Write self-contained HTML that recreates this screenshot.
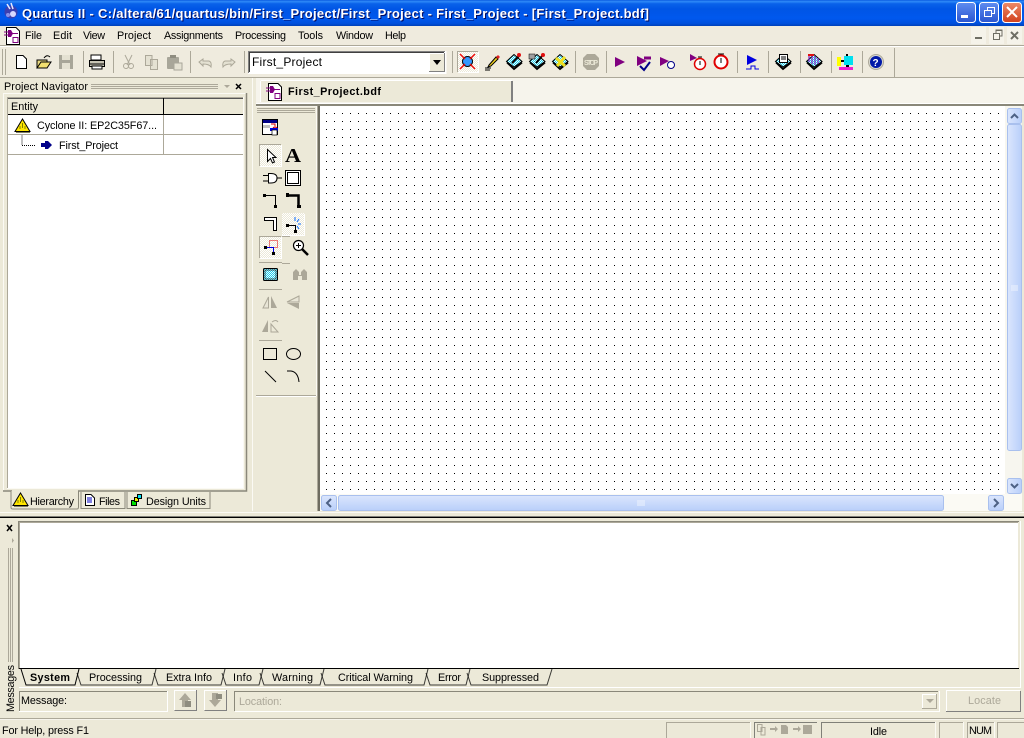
<!DOCTYPE html>
<html><head><meta charset="utf-8"><title>Quartus II</title>
<style>
html,body{margin:0;padding:0;background:#ece9d8;overflow:hidden}
svg{display:block}
text{font-family:"Liberation Sans",sans-serif;font-size:10.8px;fill:#000}
</style></head><body>
<svg width="1024" height="738" viewBox="0 0 1024 738" xmlns="http://www.w3.org/2000/svg">
<defs>
<linearGradient id="tb" x1="0" y1="0" x2="0" y2="1">
<stop offset="0" stop-color="#0a5ae0"/><stop offset=".06" stop-color="#2f8bf8"/><stop offset=".14" stop-color="#0a62ea"/><stop offset=".35" stop-color="#0055e5"/><stop offset=".7" stop-color="#0058ee"/><stop offset=".9" stop-color="#0050dd"/><stop offset="1" stop-color="#0040b8"/></linearGradient>
<linearGradient id="bl" x1="0" y1="0" x2="0" y2="1"><stop offset="0" stop-color="#5f8df0"/><stop offset="1" stop-color="#2a55d0"/></linearGradient>
<linearGradient id="rd" x1="0" y1="0" x2="0" y2="1"><stop offset="0" stop-color="#ec8a68"/><stop offset="1" stop-color="#d1401c"/></linearGradient>
<linearGradient id="sb" x1="0" y1="0" x2="1" y2="0"><stop offset="0" stop-color="#dbe6fd"/><stop offset="1" stop-color="#b9cffa"/></linearGradient>
<linearGradient id="sh" x1="0" y1="0" x2="0" y2="1"><stop offset="0" stop-color="#dbe6fd"/><stop offset="1" stop-color="#b9cffa"/></linearGradient>
<pattern id="dots" x="326" y="113" width="8" height="8" patternUnits="userSpaceOnUse"><rect width="1" height="1" fill="#000"/></pattern>
<pattern id="dith" width="2" height="2" patternUnits="userSpaceOnUse"><rect width="2" height="2" fill="#ece9d8"/><rect width="1" height="1" fill="#fff"/><rect x="1" y="1" width="1" height="1" fill="#fff"/></pattern>
<pattern id="cy" width="2" height="2" patternUnits="userSpaceOnUse"><rect width="2" height="2" fill="#22ccee"/><rect width="1" height="1" fill="#e8ffff"/><rect x="1" y="1" width="1" height="1" fill="#e8ffff"/></pattern>
<symbol id="bdf" width="17" height="18" viewBox="0 0 17 18" overflow="visible">
<path d="M2.500 .5H12L15.500 4V17.500H2.500Z" fill="#fff" stroke="#000"/>
<path d="M0 5H4M0 8H4M8 6.500H14M9 10.500V15.500H14V10.500Z" stroke="#800080" fill="none"/>
<path d="M4 3H7L9 6.500L7 10H4Z" fill="#800080"/>
</symbol>
<symbol id="disk" width="17" height="18" viewBox="0 0 17 18" overflow="visible">
<path d="M8 1.500L16 8.500L8 14L0.500 8.500Z" fill="url(#cy)" stroke="#000"/>
<path d="M1 9.500L8 16L16 9.500" fill="none" stroke="#000" stroke-width="1.800"/>
</symbol>
<symbol id="warn" width="17" height="15" viewBox="0 0 17 15" overflow="visible">
<path d="M8.500 1L16 13.500H1Z" fill="#ffe600" stroke="#000"/><path d="M8.500 5V10M6 8V11M11 8V11" stroke="#808000"/><path d="M2 14.500H16" stroke="#808060"/>
</symbol>
</defs>

<!-- base -->
<rect width="1024" height="738" fill="#ece9d8"/>
<!-- title -->
<rect width="1024" height="26" fill="url(#tb)"/>
<circle cx="11" cy="12" r="6.500" fill="#3b3fb0"/><circle cx="13" cy="14" r="3" fill="#d8d8ff"/><path d="M7 4L10 9M11 3L13 9" stroke="#e8e8ff" stroke-width="1.500"/><circle cx="8" cy="15" r="2" fill="#8890e8"/>
<text x="22" y="18" textLength="627" lengthAdjust="spacing" style="font-size:13px;font-weight:bold;fill:#000a60" dx="1" dy="1">Quartus II - C:/altera/61/quartus/bin/First_Project/First_Project - First_Project - [First_Project.bdf]</text>
<text x="22" y="18" textLength="627" lengthAdjust="spacing" style="font-size:13px;font-weight:bold;fill:#fff">Quartus II - C:/altera/61/quartus/bin/First_Project/First_Project - First_Project - [First_Project.bdf]</text>
<g>
<rect x="956.500" y="2.500" width="19" height="20" rx="3" fill="url(#bl)" stroke="#fff"/><rect x="961" y="15" width="7" height="3" fill="#fff"/>
<rect x="979.500" y="2.500" width="19" height="20" rx="3" fill="url(#bl)" stroke="#fff"/><path d="M984.500 10.500h7v6h-7zM987.500 10V7.500h7v6H992" fill="none" stroke="#fff"/><path d="M984 10.500h8M987 7.500h8" stroke="#fff"/>
<rect x="1002.500" y="2.500" width="19" height="20" rx="3" fill="url(#rd)" stroke="#fff"/><path d="M1007 7L1017 17M1017 7L1007 17" stroke="#fff" stroke-width="2"/>
</g>

<!-- menu -->
<rect y="26" width="1024" height="20" fill="#efebde"/>
<use href="#bdf" x="4" y="27"/>
<text x="25" y="39" textLength="17">File</text><text x="53" y="39" textLength="19">Edit</text><text x="83" y="39" textLength="22">View</text><text x="117" y="39" textLength="34">Project</text><text x="164" y="39" textLength="59">Assignments</text><text x="235" y="39" textLength="51">Processing</text><text x="298" y="39" textLength="25">Tools</text><text x="336" y="39" textLength="37">Window</text><text x="385" y="39" textLength="21">Help</text>
<g>
<rect x="971" y="27" width="15" height="17" fill="#f5f3ea"/><rect x="989" y="27" width="15" height="17" fill="#f5f3ea"/><rect x="1007" y="27" width="15" height="17" fill="#f5f3ea"/>
<rect x="975" y="37" width="7" height="2" fill="#6e6e64"/>
<path d="M993.500 33.500h6v6h-6zM996 33v-3h6v6h-2" fill="none" stroke="#6e6e64"/><path d="M993 33.500h7M996 30.500h6" stroke="#6e6e64"/>
<path d="M1011 32L1018 39M1018 32L1011 39" stroke="#6e6e64" stroke-width="2"/>
</g>
<rect y="45" width="1024" height="1" fill="#aca899"/><rect y="46" width="1024" height="1" fill="#fff"/>

<!-- toolbar -->
<rect y="47" width="1024" height="30" fill="#efebde"/>
<rect y="77" width="1024" height="1" fill="#aca899"/>
<rect x="256" y="78" width="768" height="26" fill="#f6f4ec"/>
<rect x="252" y="78" width="1" height="438" fill="#fbfaf4"/>
<rect x="894" y="48" width="1" height="29" fill="#aca899"/>
<g fill="#aca899">
<rect x="2" y="49" width="1" height="26"/><rect x="5" y="49" width="1" height="26"/>
<rect x="83" y="51" width="1" height="22"/><rect x="113" y="51" width="1" height="22"/><rect x="190" y="51" width="1" height="22"/><rect x="244" y="51" width="1" height="22"/><rect x="452" y="51" width="1" height="22"/><rect x="575" y="51" width="1" height="22"/><rect x="606" y="51" width="1" height="22"/><rect x="737" y="51" width="1" height="22"/><rect x="768" y="51" width="1" height="22"/><rect x="800" y="51" width="1" height="22"/><rect x="831" y="51" width="1" height="22"/><rect x="862" y="51" width="1" height="22"/>
</g>
<!-- new open save -->
<path d="M16.500 55.500H23L26.500 59V68.500H16.500Z" fill="#fff" stroke="#000"/>
<path d="M37 60H47V68H37Z" fill="#e8d880" stroke="#000"/><path d="M37 68L41 62H51L47 68Z" fill="#f2e070" stroke="#000"/><path d="M44 58Q47 54 50 57" fill="none" stroke="#000"/>
<rect x="59" y="55" width="14" height="14" fill="#a8a699"/><rect x="62" y="55" width="8" height="5" fill="#e4e1d2"/><rect x="62" y="63" width="8" height="6" fill="#e4e1d2"/>
<!-- print -->
<path d="M91 55H101V60H91Z" fill="#fff" stroke="#000"/><path d="M89.500 60.500H104.500V66.500H89.500Z" fill="#c8c4b4" stroke="#000"/><path d="M92 66H102V69H92Z" fill="#fff" stroke="#000"/><path d="M90 64H104" stroke="#000"/>
<!-- cut copy paste -->
<path d="M125 55L130 65M132 55L127 65" stroke="#aca899" fill="none"/><circle cx="126" cy="66" r="2.500" fill="none" stroke="#aca899"/><circle cx="131" cy="66" r="2.500" fill="none" stroke="#aca899"/>
<path d="M145.500 55.500H152V65.500H145.500ZM150.500 59.500H157.500V69.500H150.500Z" fill="#e4e1d2" stroke="#aca899"/>
<rect x="167" y="57" width="12" height="12" rx="1" fill="#a8a699"/><rect x="170" y="55" width="6" height="3" fill="#8f8d80"/><rect x="174" y="63" width="8" height="7" fill="#e4e1d2" stroke="#a8a699"/>
<!-- undo redo -->
<path d="M199 62L203 59V61H209Q212 62 211 67Q209 64 203 64V66Z" fill="#e4e1d2" stroke="#aca899"/>
<path d="M235 62L231 59V61H225Q222 62 223 67Q225 64 231 64V66Z" fill="#e4e1d2" stroke="#aca899"/>
<!-- combo -->
<rect x="248" y="51" width="198" height="23" fill="#fff"/>
<path d="M248.500 73V51.500H445" fill="none" stroke="#808080"/><path d="M249.500 72V52.500H444" fill="none" stroke="#404040"/><path d="M248 73.500H446V51" fill="none" stroke="#fff"/>
<rect x="429" y="53" width="16" height="19" fill="#ece9d8"/><path d="M429.500 71.500V53.500H444" fill="none" stroke="#fff"/><path d="M429 71.500H444.500V53" fill="none" stroke="#808080"/>
<path d="M433 60H441L437 65Z" fill="#000"/>
<text x="252" y="66" textLength="70" style="font-size:12px">First_Project</text>
<!-- compile icons -->
<rect x="457" y="51" width="22" height="22" fill="url(#dith)"/><path d="M457.500 72V51.500H478" fill="none" stroke="#aca899"/><path d="M458 72.500H478.500V52" fill="none" stroke="#fff"/>
<circle cx="467.500" cy="61.500" r="5" fill="#3399ff" stroke="#000"/><path d="M460 54L465 59M475 54L470 59M460 69L465 64M475 69L470 64" stroke="#f01010" stroke-width="1.500"/>
<path d="M485 68H491M485 70H490" stroke="#000"/><path d="M489 65L496 57L498 59L491 66L488 67Z" fill="#f0d020" stroke="#000"/><path d="M496 57l2-2 2 2-2 2z" fill="#e02020"/>
<use href="#disk" x="506" y="53"/><path d="M512 63L519 56" stroke="#000" stroke-width="2"/><circle cx="519" cy="55" r="2" fill="#e01010"/>
<use href="#disk" x="529" y="53"/><rect x="529" y="54" width="6" height="5" fill="#a0a0a0" stroke="#000" stroke-width=".5"/><path d="M536 63L542 56" stroke="#000" stroke-width="2"/><circle cx="543" cy="55" r="2" fill="#e01010"/>
<use href="#disk" x="552" y="53"/><path d="M556 58L565 66M565 57L557 66" stroke="#f0e020" stroke-width="3"/>
<!-- stop -->
<path d="M587 54H595L599 58V66L595 70H587L583 66V58Z" fill="#aca899"/><text x="584" y="65" textLength="14" style="font-size:7px;font-weight:bold;fill:#ece9d8">STOP</text>
<!-- flags -->
<path d="M615 57L625 62L615 67Z" fill="#800080"/>
<path d="M637 56L647 61L637 66Z" fill="#800080"/><path d="M644 58H651" stroke="#800080" stroke-width="3"/><path d="M640 66L644 70L650 62" fill="none" stroke="#000088" stroke-width="2"/>
<path d="M660 57L669 61L660 66Z" fill="#800080"/><circle cx="671" cy="65" r="3.500" fill="#fff" stroke="#000088"/>
<path d="M690 54L697 58L690 61Z" fill="#800080"/><circle cx="700" cy="64" r="5.500" fill="#fff" stroke="#e00000" stroke-width="1.500"/><path d="M700 61V65M698 57H702" stroke="#000"/>
<circle cx="721" cy="62" r="6.500" fill="#fff" stroke="#e00000" stroke-width="2"/><path d="M721 58V63M718 54H724" stroke="#000"/>
<path d="M747 55L757 60L747 65Z" fill="#0000e0"/><path d="M746 69H751V66H755V69H759" fill="none" stroke="#0000e0"/>
<use href="#disk" x="775" y="53"/><rect x="779.500" y="54.500" width="8" height="8" fill="#fff" stroke="#000"/><path d="M781 57H786M781 59H786" stroke="#000"/>
<use href="#disk" x="806" y="53"/><path d="M809 54V62M812 54V64M815 56V65M818 58V64" stroke="#8020c0" stroke-width="1.200"/><path d="M808 55H814" stroke="#e01010" stroke-width="2"/>
<rect x="837" y="57" width="4" height="9" fill="#ffff00"/><rect x="841" y="60" width="3" height="2" fill="#000"/><rect x="844" y="56" width="9" height="9" fill="#00e0f0"/><rect x="846" y="54" width="2" height="2" fill="#000"/><rect x="846" y="65" width="3" height="2" fill="#000"/><rect x="839" y="67" width="14" height="3" fill="#f020d0"/>
<circle cx="876" cy="62" r="7.500" fill="#d8d8d0" stroke="#aca899"/><circle cx="876" cy="62" r="6" fill="#0018a8"/><text x="872.500" y="66" style="font-size:10px;font-weight:bold;fill:#fff">?</text>

<!-- navigator -->
<text x="4" y="90" textLength="84">Project Navigator</text>
<path d="M91 84.500H218M91 86.500H218M91 88.500H218" stroke="#aca899"/>
<path d="M224 85H230L227 88Z" fill="#aca899"/>
<path d="M236 84L241 89M241 84L236 89" stroke="#000" stroke-width="1.500"/>
<path d="M3.500 490V93.500H246" fill="none" stroke="#fbfaf4"/>
<path d="M246.500 93V491H3" fill="none" stroke="#8a887a" stroke-width="1.500"/>
<rect x="8" y="98" width="235" height="390" fill="#fff"/>
<path d="M7.500 488V97.500H243" fill="none" stroke="#aca899"/><path d="M7 488.500H243.500V97" fill="none" stroke="#fbfaf4"/>
<rect x="8" y="98" width="235" height="16" fill="#ece9d8"/><rect x="8" y="98" width="235" height="1" fill="#555"/><rect x="8" y="114" width="235" height="1" fill="#000"/>
<rect x="163" y="98" width="1" height="16" fill="#000"/>
<rect x="163" y="115" width="1" height="39" fill="#aca899"/><rect x="8" y="134" width="235" height="1" fill="#aca899"/><rect x="8" y="154" width="235" height="1" fill="#aca899"/>
<text x="11" y="110" textLength="27">Entity</text>
<use href="#warn" x="14" y="118"/>
<text x="37" y="129" textLength="120">Cyclone II: EP2C35F67...</text>
<path d="M22 135.500V145.500H35" fill="none" stroke="#000" stroke-dasharray="1 1"/>
<path d="M41 143H45V141H48L52 145L48 149H45V147H41Z" fill="#000088"/>
<text x="59" y="149" textLength="59">First_Project</text>

<!-- nav tabs -->
<path d="M11 491V507.500Q11 509 13 509H77Q78.500 509 78.500 507V491" fill="#ece9d8" stroke="#8a887a"/>
<rect x="12" y="490" width="66" height="2" fill="#ece9d8"/>
<use href="#warn" x="12" y="492"/>
<text x="30" y="505" textLength="44">Hierarchy</text>
<path d="M81 492V508.500H125V492" fill="#ece9d8" stroke="#8a887a"/>
<path d="M85.500 494.500H91L94.500 498V505.500H85.500Z" fill="#fff" stroke="#000"/><path d="M87 498H92M87 500H92M87 502H92" stroke="#0000c0"/>
<text x="99" y="505" textLength="21">Files</text>
<path d="M127 492V508.500H210V492" fill="#ece9d8" stroke="#8a887a"/>
<rect x="131.500" y="500.500" width="5" height="5" fill="#00e000" stroke="#000"/><rect x="134.500" y="497.500" width="4" height="4" fill="#f0f000" stroke="#000"/><rect x="137.500" y="494.500" width="4" height="4" fill="#00e0f0" stroke="#000"/>
<text x="146" y="505" textLength="60">Design Units</text>

<!-- bdf tab -->
<rect x="261" y="81" width="251" height="21" fill="#ece9d8"/>
<rect x="261" y="80" width="251" height="1" fill="#fff"/><rect x="260" y="81" width="1" height="21" fill="#fff"/><rect x="511" y="81" width="2" height="21" fill="#808080"/>
<use href="#bdf" x="266" y="83"/>
<text x="288" y="95" textLength="93" style="font-weight:bold">First_Project.bdf</text>
<rect x="256" y="103" width="768" height="1" fill="#fff"/>
<rect x="256" y="104" width="768" height="2" fill="#8a887a"/>

<!-- tool palette -->
<rect x="256" y="106" width="60" height="1" fill="#f6f4ec"/>
<path d="M257 108.500H315M257 110.500H315M257 112.500H315" stroke="#aca899"/>
<rect x="318" y="106" width="2" height="405" fill="#6e6c60"/>
<rect x="316" y="106" width="1" height="290" fill="#fbfaf4"/><rect x="317" y="106" width="1" height="405" fill="#aca899"/>
<rect x="256" y="395" width="60" height="1" fill="#aca899"/><rect x="256" y="396" width="60" height="1" fill="#fff"/>
<!-- tool icons -->
<rect x="262.500" y="119.500" width="15" height="15" fill="#fff" stroke="#000"/><rect x="263" y="120" width="14" height="3" fill="#000088"/><rect x="263" y="125" width="7" height="3" fill="#c0c0c0"/><path d="M271 124H275V128M273 127L275 129L277 127" fill="none" stroke="#e00000"/><rect x="270" y="128" width="8" height="3" fill="#0000e0"/><rect x="272" y="130" width="5" height="5" fill="#fff" stroke="#000" stroke-width=".7"/>
<rect x="259" y="144" width="23" height="23" fill="url(#dith)"/><path d="M259.500 166V144.500H281" fill="none" stroke="#aca899"/><path d="M260 166.500H281.500V145" fill="none" stroke="#fff"/>
<path d="M267.500 149.500V161.500L270.500 158.500L272.500 163L274.500 162L272.500 157.500H276Z" fill="#fff" stroke="#000"/>
<text x="285" y="162" textLength="16" lengthAdjust="spacingAndGlyphs" style="font-family:'Liberation Serif',serif;font-size:20px;font-weight:bold">A</text>
<path d="M268.500 173.500H271Q277 173.500 277 178Q277 183 271 183H268.500Z" fill="#fff" stroke="#000"/><path d="M263 175.500H268M263 181H268M277 178H282" stroke="#000"/>
<rect x="285.500" y="170.500" width="15" height="15" fill="#fff" stroke="#000"/><rect x="287.500" y="172.500" width="11" height="11" fill="none" stroke="#000"/>
<path d="M264 195.500H275.500V206" fill="none" stroke="#000"/><rect x="263" y="194" width="3" height="3" fill="#000"/><rect x="274" y="205" width="3" height="3" fill="#000"/>
<path d="M287 195.500H298.500V206" fill="none" stroke="#000" stroke-width="2.500"/><rect x="286" y="193" width="3" height="4" fill="#000"/><rect x="297" y="205" width="4" height="3" fill="#000"/>
<path d="M264.500 217.500H276.500V230.500H273.500V220.500H264.500Z" fill="#fff" stroke="#000"/>
<rect x="282" y="213" width="23" height="23" fill="url(#dith)"/><path d="M282 235.500H304.500V214" fill="none" stroke="#fff"/>
<path d="M287 225.500H295.500V231" fill="none" stroke="#000"/><rect x="286" y="224" width="3" height="3" fill="#000"/><rect x="294" y="230" width="3" height="3" fill="#000"/><path d="M295 217V221M299 219L297 222M301 224H298M299 229L297 226" stroke="#0a6cff"/>
<rect x="259" y="236" width="23" height="23" fill="url(#dith)"/><path d="M259.500 258V236.500H281" fill="none" stroke="#aca899"/><path d="M260 258.500H281.500V237" fill="none" stroke="#fff"/>
<rect x="269.500" y="240.500" width="8" height="7" fill="none" stroke="#e00000" stroke-dasharray="1 1"/><path d="M265 247.500H273.500V253" fill="none" stroke="#0000e0"/><rect x="264" y="246" width="3" height="3" fill="#000"/><rect x="272" y="252" width="3" height="3" fill="#000"/>
<rect x="282" y="236" width="8" height="1" fill="#aca899"/>
<circle cx="298.500" cy="245.500" r="5" fill="#fff" stroke="#000" stroke-width="1.200"/><path d="M296 245.500H301M298.500 243V248" stroke="#000"/><path d="M302 249L308 255" stroke="#000" stroke-width="2.500"/>
<rect x="259" y="262" width="23" height="1" fill="#aca899"/><rect x="282" y="263" width="8" height="1" fill="#aca899"/>
<rect x="263.500" y="268.500" width="14" height="12" rx="1" fill="url(#cy)" stroke="#000" stroke-width="1"/><rect x="265" y="270" width="11" height="9" fill="none" stroke="#000" stroke-width=".6"/>
<path d="M293 280V272L296 269L299 272V275H301V272L304 269L307 272V280H302V276H298V280Z" fill="#aca899"/>
<rect x="259" y="289" width="23" height="1" fill="#aca899"/>
<path d="M268.500 297L263 308H268.500Z" fill="#e8e5d6" stroke="#aca899"/><path d="M271 296V308H277Z" fill="#aca899"/>
<path d="M299 296L287 302H299Z" fill="#e8e5d6" stroke="#aca899"/><path d="M287 303H299V309Z" fill="#aca899"/>
<path d="M268 320L262 332H268Z" fill="#aca899"/><path d="M271 324V332H278Z" fill="none" stroke="#aca899"/><path d="M272 322Q276 319 278 322" fill="none" stroke="#aca899"/>
<rect x="259" y="340" width="23" height="1" fill="#aca899"/>
<rect x="263.500" y="348.500" width="13" height="11" fill="none" stroke="#000"/>
<ellipse cx="293.500" cy="354" rx="7" ry="5.500" fill="none" stroke="#000"/>
<path d="M265 371L276 382" stroke="#000"/>
<path d="M287 371H291Q298 372 299 382" fill="none" stroke="#000"/>

<!-- canvas -->
<rect x="320" y="106" width="687" height="388" fill="#fff"/>
<rect x="320" y="106" width="687" height="388" fill="url(#dots)"/>
<rect x="1005" y="106" width="17" height="388" fill="#f7f6ef"/>
<rect x="320" y="494" width="702" height="17" fill="#fbfaf4"/>
<!-- vscroll -->
<rect x="1007.500" y="108.500" width="14" height="15" rx="2" fill="url(#sb)" stroke="#a9c0ee"/><path d="M1011 118L1014.500 114.500L1018 118" fill="none" stroke="#4d6185" stroke-width="2"/>
<rect x="1007.500" y="124.500" width="14" height="326" rx="2" fill="url(#sb)" stroke="#a9c0ee"/>
<rect x="1007.500" y="478.500" width="14" height="15" rx="2" fill="url(#sb)" stroke="#a9c0ee"/><path d="M1011 484L1014.500 487.500L1018 484" fill="none" stroke="#4d6185" stroke-width="2"/>
<path d="M1011 286H1018M1011 288H1018M1011 290H1018" stroke="#eef3fe"/>
<!-- hscroll -->
<rect x="321.500" y="495.500" width="15" height="15" rx="2" fill="url(#sh)" stroke="#a9c0ee"/><path d="M331 499L327 503L331 507" fill="none" stroke="#4d6185" stroke-width="2"/>
<rect x="338.500" y="495.500" width="605" height="15" rx="2" fill="url(#sh)" stroke="#a9c0ee"/>
<path d="M638 500V506M640 500V506M642 500V506M644 500V506" stroke="#eef3fe"/>
<rect x="988.500" y="495.500" width="15" height="15" rx="2" fill="url(#sh)" stroke="#a9c0ee"/><path d="M994 499L998 503L994 507" fill="none" stroke="#4d6185" stroke-width="2"/>

<!-- splitter -->
<rect y="511" width="1024" height="5" fill="#ece9d8"/>
<rect y="512" width="1024" height="1" fill="#fbfaf4"/>
<rect y="516" width="1024" height="1" fill="#808078"/>
<rect y="517" width="1024" height="1" fill="#000"/>
<rect y="518" width="1024" height="220" fill="#ece9d8"/>

<!-- messages -->
<path d="M7 525L12 531M12 525L7 531" stroke="#000" stroke-width="1.500"/>
<path d="M12 538L14 540.500L12 543Z" fill="#aca899"/>
<path d="M8.500 548V662M10.500 548V662M12.500 548V662" stroke="#aca899"/>
<rect x="19" y="522" width="999" height="147" fill="#fff"/>
<path d="M18.500 669V521.500H1019" fill="none" stroke="#8a887a"/><path d="M19.500 668V522.500H1018" fill="none" stroke="#aca899"/>
<path d="M1020.500 521V687" stroke="#fff"/>
<rect x="19" y="668" width="1000" height="1" fill="#000"/>
<text transform="translate(14,712) rotate(-90)" x="0" y="0" textLength="47">Messages</text>
<!-- message tabs -->
<path d="M21 669L26 685H75L79 669" fill="none" stroke="#000"/>
<path d="M77 673L81 685H152L156 669" fill="none" stroke="#000" stroke-opacity=".75"/>
<path d="M154 673L158 685H221L225 669" fill="none" stroke="#000" stroke-opacity=".75"/>
<path d="M222 673L226 685H259L263 669" fill="none" stroke="#000" stroke-opacity=".75"/>
<path d="M260 673L264 685H320L324 669" fill="none" stroke="#000" stroke-opacity=".75"/>
<path d="M321 673L325 685H424L428 669" fill="none" stroke="#000" stroke-opacity=".75"/>
<path d="M426 673L430 685H466L470 669" fill="none" stroke="#000" stroke-opacity=".75"/>
<path d="M467 673L471 685H547L552 669" fill="none" stroke="#000" stroke-opacity=".75"/>
<text x="30" y="681" textLength="40" style="font-weight:bold">System</text>
<text x="89" y="681" textLength="53">Processing</text>
<text x="166" y="681" textLength="46">Extra Info</text>
<text x="233" y="681" textLength="19">Info</text>
<text x="272" y="681" textLength="41">Warning</text>
<text x="338" y="681" textLength="75">Critical Warning</text>
<text x="438" y="681" textLength="23">Error</text>
<text x="482" y="681" textLength="57">Suppressed</text>
<rect x="19" y="687" width="1002" height="1" fill="#fff"/>
<!-- message row -->
<path d="M19.500 711V691.500H167" fill="none" stroke="#8a887a"/><path d="M19 711.500H167.500V691" fill="none" stroke="#fff"/>
<text x="21" y="704" textLength="46">Message:</text>
<rect x="174" y="690" width="23" height="21" fill="#ece9d8"/><path d="M174.500 710V690.500H196" fill="none" stroke="#fff"/><path d="M174.500 710.500H196.500V690" fill="none" stroke="#808080"/>
<path d="M185 693L191 700H188V707H182V700H179Z" fill="#aca899"/><rect x="185" y="701" width="6" height="6" fill="#8f8d80"/>
<rect x="204" y="690" width="23" height="21" fill="#ece9d8"/><path d="M204.500 710V690.500H226" fill="none" stroke="#fff"/><path d="M204.500 710.500H226.500V690" fill="none" stroke="#808080"/>
<path d="M215 707L221 700H218V693H212V700H209Z" fill="#aca899"/><path d="M216 694h6v5h-6z" fill="#8f8d80"/>
<rect x="235" y="691" width="704" height="21" fill="#ece9d8"/><path d="M234.500 711V691.500H938" fill="none" stroke="#8a887a"/><path d="M235 711.500H939.500V691" fill="none" stroke="#fff"/>
<text x="239" y="705" textLength="43" style="fill:#aca899">Location:</text>
<rect x="922" y="694" width="15" height="15" fill="#ece9d8"/><path d="M922.500 709V694.500H937" fill="none" stroke="#fff"/><path d="M922 708.500H936.500V694" fill="none" stroke="#aca899"/><path d="M926 699H934L930 703Z" fill="#aca899"/>
<rect x="946" y="691" width="75" height="21" fill="#ece9d8"/><path d="M946.500 711V690.500H1020" fill="none" stroke="#fff"/><path d="M946 711.500H1020.500V691" fill="none" stroke="#808080"/>
<text x="968" y="704" textLength="33" style="fill:#aca899">Locate</text>

<!-- status -->
<rect y="718" width="1024" height="1" fill="#aca899"/><rect y="719" width="1024" height="1" fill="#fff" opacity=".5"/>
<text x="2" y="734" textLength="87">For Help, press F1</text>
<g fill="none" stroke="#aca899">
<path d="M666.500 738V722.500H750"/>
<path d="M939.500 738V722.500H963"/>
<path d="M967.500 738V722.500H994"/>
<path d="M997.500 738V722.500H1024"/>
</g>
<g fill="none" stroke="#fbfaf4">
<path d="M750.500 722V738M935.500 722V738M963.500 722V738M994.500 722V738"/>
</g>
<path d="M821.500 738V722.500H935" fill="none" stroke="#808078"/>
<path d="M754.500 738V722.500H817" fill="none" stroke="#808078"/>
<path d="M757.500 724.500H762V731.500H757.500ZM761 727.500H765V735H761Z" fill="#ece9d8" stroke="#aca899"/>
<path d="M770 728H775V726L778 729L775 732V730H770Z" fill="#aca899"/><path d="M781 725H786L788 727V734H781Z" fill="#aca899"/>
<path d="M793 728H798V726L801 729L798 732V730H793Z" fill="#aca899"/><rect x="803" y="725" width="9" height="9" fill="#aca899"/>
<text x="870" y="735" textLength="17">Idle</text>
<text x="969" y="734" textLength="23">NUM</text>
</svg>
</body></html>
